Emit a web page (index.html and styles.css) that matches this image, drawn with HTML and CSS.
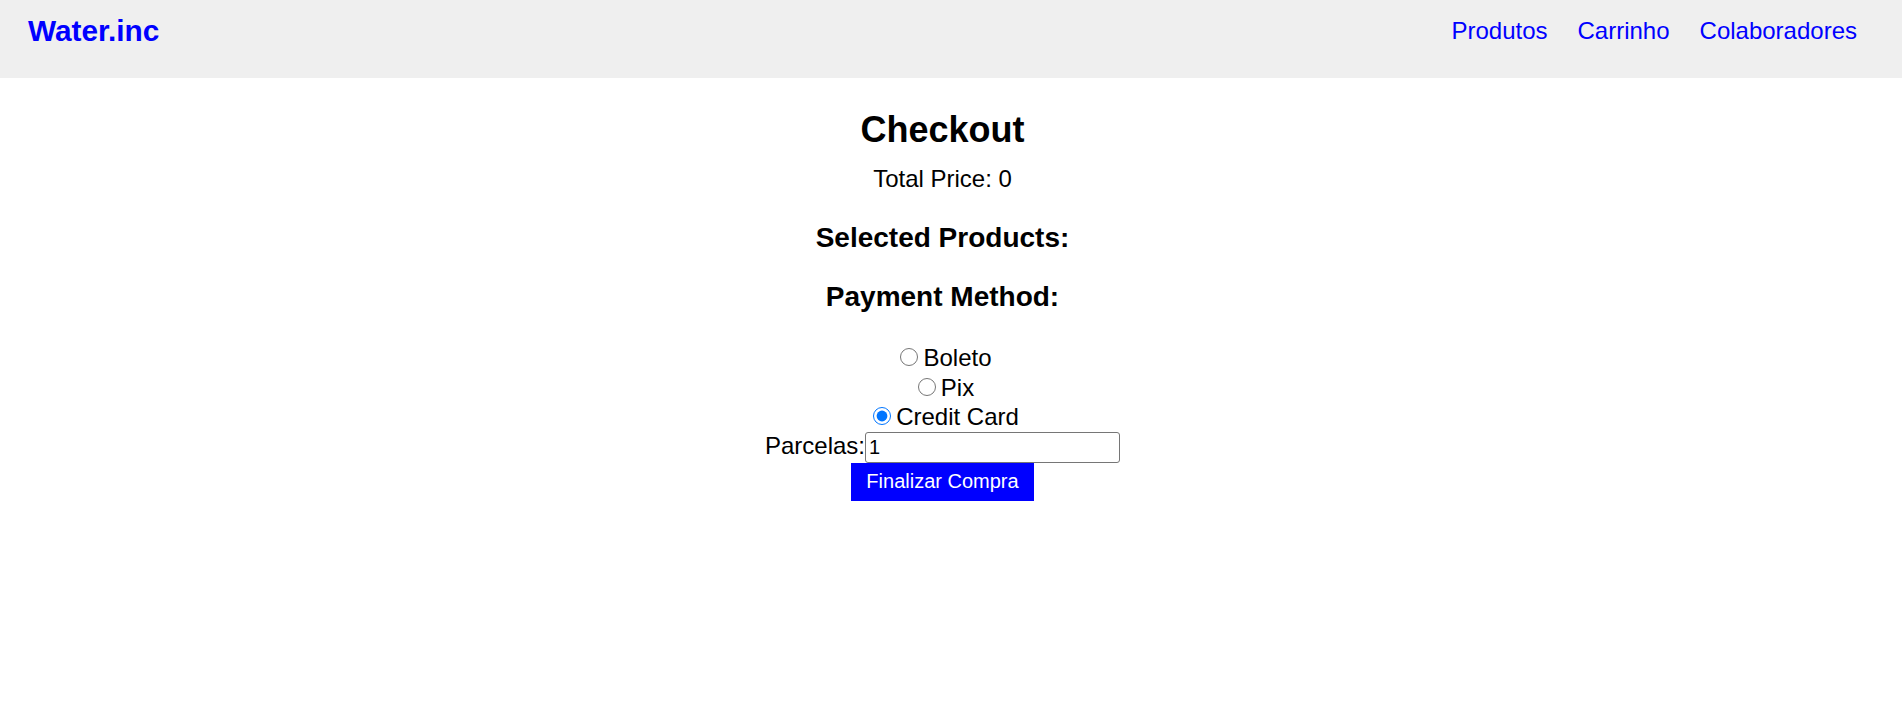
FILE: index.html
```html
<!DOCTYPE html>
<html lang="pt">
<head>
<meta charset="utf-8">
<title>Water.inc - Checkout</title>
<link rel="stylesheet" href="styles.css">
</head>
<body>
<header class="topbar">
  <a class="logo" href="#">Water.inc</a>
  <nav class="nav">
    <a class="nav-link" href="#">Produtos</a>
    <a class="nav-link" href="#">Carrinho</a>
    <a class="nav-link" href="#">Colaboradores</a>
  </nav>
</header>
<main class="checkout">
  <h1 class="title">Checkout</h1>
  <p class="total">Total Price: 0</p>
  <h3 class="subtitle">Selected Products:</h3>
  <h3 class="subtitle">Payment Method:</h3>
  <div class="methods">
    <div class="option"><label><input class="radio" type="radio" name="pay" value="boleto">Boleto</label></div>
    <div class="option"><label><input class="radio" type="radio" name="pay" value="pix">Pix</label></div>
    <div class="option"><label><input class="radio" type="radio" name="pay" value="card" checked>Credit Card</label></div>
  </div>
  <div class="installments"><label for="parcelas">Parcelas:</label><input id="parcelas" class="field" type="number" value="1"></div>
  <div class="actions"><button class="buy" type="button">Finalizar Compra</button></div>
</main>
</body>
</html>
```

FILE: styles.css
```css
html, body {
  margin: 0;
  padding: 0;
  background: #ffffff;
}

body {
  font-family: "Liberation Sans", Arial, sans-serif;
  color: #000000;
}

.topbar {
  display: flex;
  justify-content: space-between;
  align-items: flex-start;
  height: 78px;
  box-sizing: border-box;
  padding: 14px 45px 0 28px;
  background: #efefef;
}

.logo {
  font-size: 29.8px;
  line-height: 33px;
  font-weight: bold;
  color: #0000ff;
  text-decoration: none;
}

.nav {
  display: flex;
  gap: 30px;
  margin-top: 3px;
}

.nav-link {
  font-size: 24px;
  line-height: 28px;
  color: #0000ff;
  text-decoration: none;
}

.checkout {
  margin-right: 17px;
  text-align: center;
  font-size: 24px;
}

.title {
  margin: 31px 0 15px;
  font-size: 36px;
  line-height: 41px;
  font-weight: bold;
}

.total {
  margin: 0;
  padding-bottom: 2px;
  font-size: 24px;
  line-height: 28px;
}

.subtitle {
  margin: 27px 0;
  font-size: 28px;
  line-height: 32px;
  font-weight: bold;
}

.methods {
  margin-top: 30px;
}

.option {
  line-height: 29.5px;
}

.radio {
  width: 18px;
  height: 18px;
  margin: 4px 5px 0 7px;
  vertical-align: baseline;
}

.installments {
  line-height: 28px;
}

.field {
  width: 255px;
  height: 31px;
  box-sizing: border-box;
  margin: 0;
  padding: 0 3px;
  border: 1px solid #767676;
  border-radius: 3px;
  font-family: "Liberation Sans", Arial, sans-serif;
  font-size: 20px;
  color: #000000;
  vertical-align: baseline;
  -moz-appearance: textfield;
  appearance: textfield;
}

.field::-webkit-outer-spin-button,
.field::-webkit-inner-spin-button {
  -webkit-appearance: none;
  margin: 0;
}

.actions {
  display: flex;
  justify-content: center;
}

.buy {
  margin: 0;
  padding: 7.5px 15px;
  border: none;
  background: #0000ff;
  color: #ffffff;
  font-family: "Liberation Sans", Arial, sans-serif;
  font-size: 20px;
  line-height: 23px;
}
```
